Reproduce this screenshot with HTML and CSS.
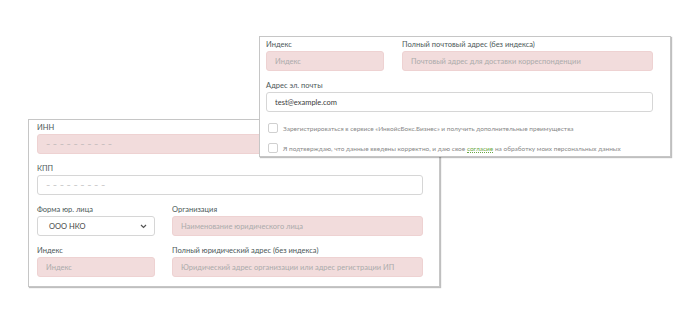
FILE: index.html
```html
<!DOCTYPE html>
<html>
<head>
    <meta charset="UTF-8">
    <title>Форма организации</title>
    <link rel="stylesheet" href="styles.css">
</head>
<body>
    <div class="stage">
        <div class="card card-org">
            <div class="field">
                <label class="label">ИНН</label>
                <input class="input error dashes" type="text" placeholder="– – – – – – – – – –">
            </div>
            <div class="field">
                <label class="label">КПП</label>
                <input class="input dashes" type="text" placeholder="– – – – – – – – –">
            </div>
            <div class="row">
                <div class="field small">
                    <label class="label">Форма юр. лица</label>
                    <div class="select">
                        <span>ООО НКО</span>
                        <svg width="7" height="5" viewBox="0 0 7 5"><path d="M1 1l2.5 2.5L6 1" fill="none" stroke="#555" stroke-width="1.2"/></svg>
                    </div>
                </div>
                <div class="field wide">
                    <label class="label">Организация</label>
                    <input class="input error" type="text" placeholder="Наименование юридического лица">
                </div>
            </div>
            <div class="row">
                <div class="field small">
                    <label class="label">Индекс</label>
                    <input class="input error" type="text" placeholder="Индекс">
                </div>
                <div class="field wide">
                    <label class="label">Полный юридический адрес (без индекса)</label>
                    <input class="input error" type="text" placeholder="Юридический адрес организации или адрес регистрации ИП">
                </div>
            </div>
        </div>

        <div class="card card-mail">
            <div class="row">
                <div class="field small">
                    <label class="label">Индекс</label>
                    <input class="input error" type="text" placeholder="Индекс">
                </div>
                <div class="field wide">
                    <label class="label">Полный почтовый адрес (без индекса)</label>
                    <input class="input error" type="text" placeholder="Почтовый адрес для доставки корреспонденции">
                </div>
            </div>
            <div class="field">
                <label class="label">Адрес эл. почты</label>
                <input class="input" type="text" value="test@example.com">
            </div>
            <div class="checks">
                <label class="check"><span class="box"></span><span>Зарегистрироваться в сервисе «ИнвойсБокс.Бизнес» и получить дополнительные преимущества</span></label>
                <label class="check"><span class="box"></span><span>Я подтверждаю, что данные введены корректно, и даю свое <a class="link">согласие</a> на обработку моих персональных данных</span></label>
            </div>
        </div>
    </div>
</body>
</html>
```

FILE: styles.css
```css
body {
    margin: 0;
    background: #fff;
    font-family: Lato, "Open Sans", sans-serif;
}

.stage {
    position: relative;
    box-sizing: border-box;
    width: 700px;
    height: 321px;
    padding: 119px 0 0 28px;
}

.card {
    box-sizing: border-box;
    width: 412px;
    background: #fff;
    border: 1px solid #c6c6c6;
    box-shadow: 1px 1px 1px rgba(0, 0, 0, 0.25);
    display: flex;
    flex-direction: column;
    gap: 10px;
}

.card-org {
    height: 168px;
    padding: 3px 16px 0 8px;
}

/* lies over the first card */
.card-mail {
    position: absolute;
    left: 259px;
    top: 36px;
    z-index: 1;
    height: 121px;
    padding: 3px 17px 0 6px;
}

.row {
    display: flex;
    gap: 17px;
}

.card-mail .row {
    gap: 18px;
}

.field {
    display: flex;
    flex-direction: column;
    gap: 1px;
}

.small {
    width: 118px;
}

.wide {
    flex: 1;
}

.label {
    font-size: 7.5px;
    line-height: 10px;
    color: #4b5858;
}

.input,
.select {
    box-sizing: border-box;
    width: 100%;
    height: 20px;
    margin: 0;
    padding: 0 8px;
    border: 1px solid #d6d6d6;
    border-radius: 3px;
    background: #fff;
    font-family: Lato, "Open Sans", sans-serif;
    font-size: 7.5px;
    color: #3a3a3a;
    outline: none;
}

.input::placeholder {
    color: #a9a9a9;
}

.input.dashes {
    letter-spacing: 0.3px;
}

.input.error {
    background: #f2dcdc;
    border-color: #eed2d2;
}

.input.error::placeholder {
    color: #ababab;
}

.select {
    display: flex;
    align-items: center;
    justify-content: space-between;
    padding: 0 7px 0 11px;
    color: #444;
}

.checks {
    display: flex;
    flex-direction: column;
    gap: 10px;
    margin-top: 1px;
}

.check {
    display: flex;
    align-items: center;
    gap: 5px;
    height: 10px;
    padding-left: 2px;
    font-size: 6.5px;
    color: #888;
    white-space: nowrap;
}

.box {
    box-sizing: border-box;
    width: 10px;
    height: 10px;
    border: 1px solid #d0d0d0;
    border-radius: 2px;
    flex: none;
}

.link {
    color: #6aa744;
    border-bottom: 1px dotted #6aa744;
}
```
